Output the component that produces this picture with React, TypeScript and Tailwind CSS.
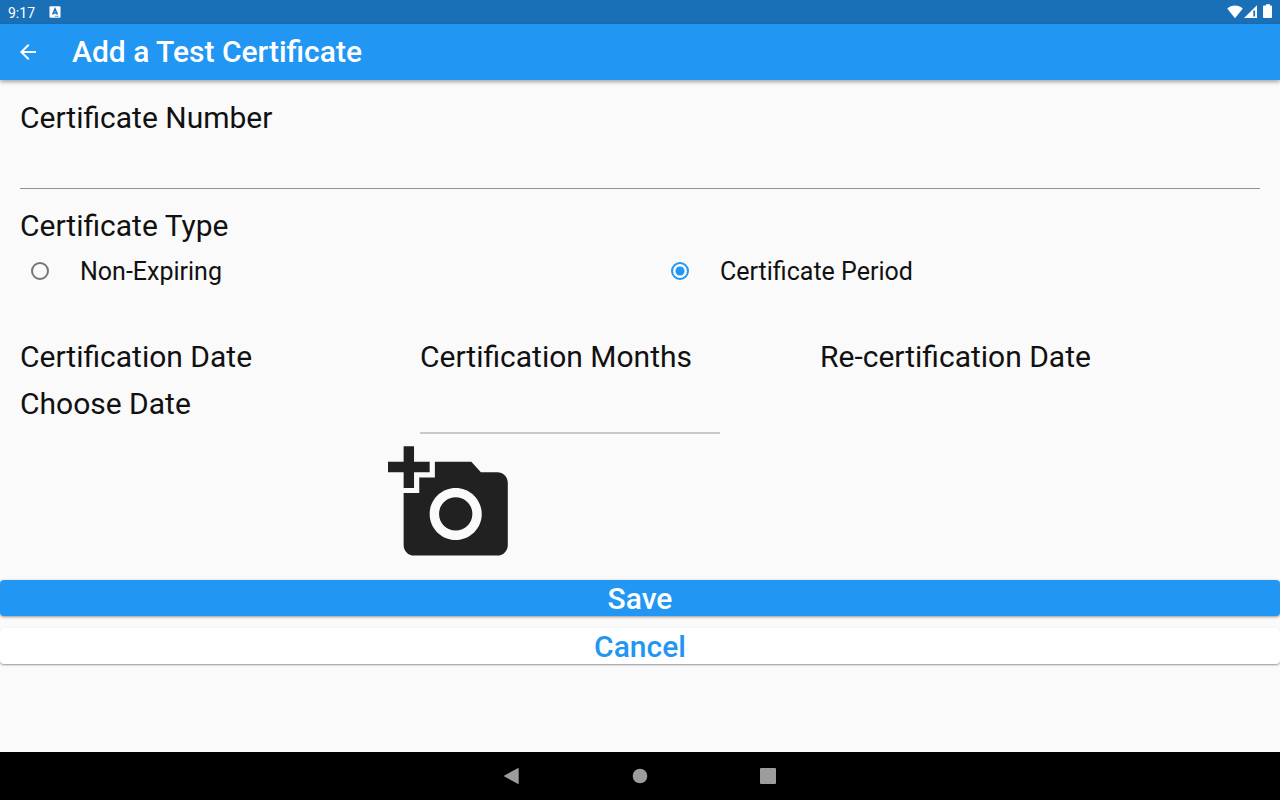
import React, { useState } from 'react';

const TYPES = ['Non-Expiring', 'Certificate Period'];

const LABEL = "text-[30px] leading-[35px] whitespace-nowrap [font-feature-settings:'liga'_1]";

function StatusBar() {
  return (
    <div className="h-6 bg-[#1a70b7] flex items-center justify-between pl-2 pr-1.5 text-white">
      <div className="flex items-center gap-3.5">
        <span className="text-[14px] leading-6 pt-px">9:17</span>
        <svg width="12" height="12" viewBox="0 0 12 12">
          <rect x="0.5" y="0.3" width="11" height="11.4" rx="1" fill="#fff" />
          <path d="M3.600 8.500 6 3l2.400 5.500M4.300 7h3.400" fill="none" stroke="#1a70b7" strokeWidth="1.500" />
          <path d="M6 10.300h3.600" stroke="#1a70b7" strokeWidth="0.7" />
        </svg>
      </div>
      <svg width="48" height="16" viewBox="0 0 48 16" fill="#fff">
        <path d="M9 14.200 1.200 4.600C5.500 .4 12.500 .4 16.800 4.600z" />
        <path d="M31 1.200V14H18z" />
        <path d="M27.300 6.500h1.800v6h-1.800z" fill="#1a70b7" />
        <path d="M38 1.500h2V.3h4v1.200h1q1 0 1 1V13q0 1-1 1h-7q-1 0-1-1V2.500q0-1 1-1z" />
      </svg>
    </div>
  );
}

function Radio({ checked }: { checked: boolean }) {
  return (
    <svg width="20" height="20" viewBox="0 0 20 20" fill="none" className={checked ? 'text-[#2196f3]' : 'text-[#757575]'}>
      <circle cx="10" cy="10" r="8" stroke="currentColor" strokeWidth="2" />
      {checked && <circle cx="10" cy="10" r="4.500" fill="currentColor" />}
    </svg>
  );
}

export default function App() {
  const [type, setType] = useState('Certificate Period');

  return (
    <div className="w-[1280px] h-[800px] flex flex-col overflow-hidden bg-[#fafafa] text-[#111] font-['Roboto',sans-serif]">
      <StatusBar />
      <header className="relative h-14 shrink-0 bg-[#2196f3] flex items-center pl-4 text-white shadow-[0_2px_4px_rgba(0,0,0,0.35)]">
        <button className="w-6 h-6">
          <svg width="24" height="24" viewBox="0 0 24 24" fill="#fff">
            <path d="M20 11H7.830l5.590-5.590L12 4l-8 8 8 8 1.410-1.410L7.830 13H20v-2z" />
          </svg>
        </button>
        <h1 className="ml-8 text-[30px] leading-[35px] pb-px font-medium [font-feature-settings:'liga'_1]">Add a Test Certificate</h1>
      </header>

      <main className="flex-1 flex flex-col">
        <div className="px-5 pt-5">
          <div className={LABEL}>Certificate Number</div>
          <input className="block w-full h-[54px] text-[30px] outline-none border-b border-[#949494]" />
        </div>

        <div className="px-5 pt-[19px]">
          <div className={LABEL}>Certificate Type</div>
        </div>
        <div className="grid grid-cols-2">
          {TYPES.map((name) => (
            <button key={name} onClick={() => setType(name)} className="flex items-center h-14 pl-[30px] text-left">
              <Radio checked={type === name} />
              <span className="ml-[30px] pt-px text-[25px] leading-[30px] [font-feature-settings:'liga'_1]">{name}</span>
            </button>
          ))}
        </div>

        <div className="flex h-[95px] mt-10 px-5 gap-[100px]">
          <div className="w-[300px]">
            <div className={LABEL}>Certification Date</div>
            <button className={`mt-3 block ${LABEL}`}>Choose Date</button>
          </div>
          <div className="w-[300px]">
            <div className={LABEL}>Certification Months</div>
            <input className="block w-full h-[60px] text-[30px] outline-none border-b-2 border-[#c8c8c8]" />
          </div>
          <div className="w-[300px]">
            <div className={LABEL}>Re-certification Date</div>
          </div>
        </div>

        <button className="ml-[388px] mt-[7px] w-[125px] h-[125px]">
          <svg width="125" height="125" viewBox="0 0 24 24" fill="#212121">
            <path d="M3 4V1h2v3h3v2H5v3H3V6H0V4h3zm3 6V7h3V4h7l1.830 2H21c1.100 0 2 .9 2 2v12c0 1.100-.9 2-2 2H5c-1.100 0-2-.9-2-2V10h3zm7 9c2.760 0 5-2.240 5-5s-2.240-5-5-5-5 2.240-5 5 2.240 5 5 5zm-3.200-5c0 1.770 1.430 3.200 3.200 3.200s3.200-1.430 3.200-3.200-1.430-3.200-3.200-3.200-3.200 1.430-3.200 3.200z" />
          </svg>
        </button>

        <div className="flex flex-col gap-3 mt-[14px]">
          <button className="h-9 rounded-[4px] bg-[#2196f3] text-white text-[30px] leading-[37px] font-medium shadow-[0_1px_3px_rgba(0,0,0,0.4)]">
            Save
          </button>
          <button className="h-9 rounded-[4px] bg-white text-[#2196f3] text-[30px] leading-[37px] font-medium shadow-[0_1px_2px_rgba(0,0,0,0.4)]">
            Cancel
          </button>
        </div>
      </main>

      <nav className="h-12 shrink-0 bg-black flex items-center justify-center gap-28">
        <svg width="16" height="16" viewBox="0 0 16 16" fill="#9c9c9c">
          <path d="M14.700.4V15.600q0 .5-.6.3L.3 8.400q-.4-.4 0-.8L14.100.100q.6-.2.600.3z" />
        </svg>
        <svg width="16" height="16" viewBox="0 0 16 16" fill="#9c9c9c">
          <circle cx="8" cy="8" r="7.300" />
        </svg>
        <span className="w-4 h-4 rounded-[1px] bg-[#9c9c9c]" />
      </nav>
    </div>
  );
}
